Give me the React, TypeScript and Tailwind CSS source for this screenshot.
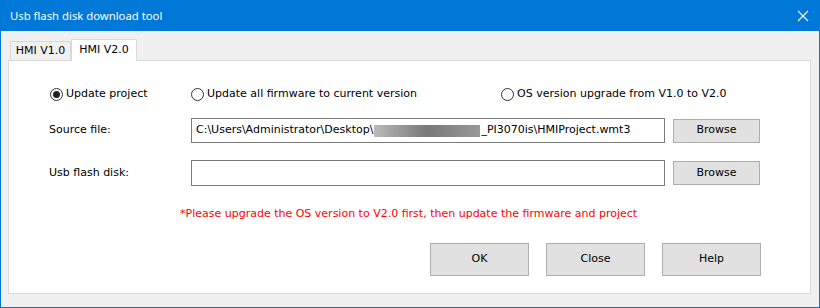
import React from "react";

const body = { fontFamily: '"DejaVu Sans", Tahoma, sans-serif' } as React.CSSProperties;

function Radio({ checked, label }: { checked?: boolean; label: string }) {
  return (
    <div className="flex items-center gap-[3px]">
      <span className="w-[13px] h-[13px] rounded-full border border-[#333] bg-white flex items-center justify-center">
        {checked && <span className="w-[7px] h-[7px] rounded-full bg-[#222]" />}
      </span>
      <span>{label}</span>
    </div>
  );
}

function Btn({ label, cls }: { label: string; cls: string }) {
  return (
    <div className={`border border-[#adadad] bg-[#e1e1e1] flex items-center justify-center text-[#000] ${cls}`}>
      {label}
    </div>
  );
}

export default function App() {
  return (
    <div className="w-[820px] h-[308px] bg-[#0078d7] p-[1px] flex flex-col">
      <div className="h-[30px] flex items-center justify-between pl-[9px] pr-[10px] text-white text-[11.3px]" style={{ fontFamily: '"Noto Sans", sans-serif' }}>
        <span>Usb flash disk download tool</span>
        <svg width="12" height="12" viewBox="0 0 12 12" stroke="white" strokeWidth="1.1"><path d="M1 1L11 11M11 1L1 11" /></svg>
      </div>
      <div className="flex-1 bg-[#f0f0f0] px-[7px] pt-[7px] text-[11px] text-black flex flex-col" style={body}>
        <div className="flex items-end h-[22px] pl-[2px]">
          <div className="h-[19px] w-[61px] border border-b-0 border-[#d9d9d9] bg-[#f0f0f0] flex items-center justify-center">HMI V1.0</div>
          <div className="h-[22px] w-[66px] border border-b-0 border-[#d9d9d9] bg-white flex items-center justify-center -mb-[1px] relative z-10">HMI V2.0</div>
        </div>
        <div className="h-[234px] w-[803px] border border-[#d9d9d9] bg-white flex flex-col">
          <div className="flex items-center h-[24px] mt-[21px]">
            <div className="pl-[41px] w-[182px]"><Radio checked label="Update project" /></div>
            <div className="w-[310px]"><Radio label="Update all firmware to current version" /></div>
            <div><Radio label="OS version upgrade from V1.0 to V2.0" /></div>
          </div>
          <div className="flex items-center mt-[12px] h-[25px]">
            <div className="w-[182px] pl-[40px]">Source file:</div>
            <div className="w-[474px] h-[25px] border border-[#7a7a7a] flex items-center pl-[4px] whitespace-nowrap overflow-hidden">
              <span>C:\Users\Administrator\Desktop\</span>
              <span className="inline-block w-[106px] h-[12px] bg-gradient-to-r from-[#bbb] via-[#777] to-[#999] mx-[1px]" />
              <span>_PI3070is\HMIProject.wmt3</span>
            </div>
            <Btn label="Browse" cls="ml-[8px] w-[87px] h-[24px]" />
          </div>
          <div className="flex items-center mt-[17px] h-[26px]">
            <div className="w-[182px] pl-[40px]">Usb flash disk:</div>
            <div className="w-[474px] h-[26px] border border-[#7a7a7a]" />
            <Btn label="Browse" cls="ml-[8px] w-[87px] h-[24px]" />
          </div>
          <div className="mt-[18px] pl-[171px] text-[#ff0000] h-[20px] flex items-center">
            *Please upgrade the OS version to V2.0 first, then update the firmware and project
          </div>
          <div className="flex mt-[19px] pl-[421px] gap-[17px]">
            <Btn label="OK" cls="w-[99px] h-[33px]" />
            <Btn label="Close" cls="w-[99px] h-[33px]" />
            <Btn label="Help" cls="w-[99px] h-[33px]" />
          </div>
        </div>
      </div>
    </div>
  );
}
